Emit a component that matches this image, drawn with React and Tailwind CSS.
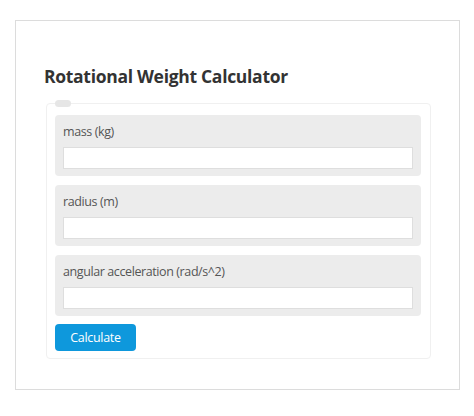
import React from 'react'

const FIELDS = ['mass (kg)', 'radius (m)', 'angular acceleration (rad/s^2)']

export default function App() {
  return (
    <div className="w-[474px] h-[416px] bg-white pt-[20px] pl-[15px] font-['Open_Sans',_'Noto_Sans',_sans-serif]">
      <div className="w-[445px] h-[370px] border border-[#dcdcdc] pl-[28px] pt-[43px]">
        <h1 className="text-[17.5px] leading-[24px] font-bold text-[#333] tracking-[-0.3px]">Rotational Weight Calculator</h1>
        <div className="relative mt-[15px] ml-[2px] w-[385px] h-[256px] border border-[#f0f0f0] rounded-[4px] pt-[11px] pl-[8px]">
          <span className="absolute left-[8px] -top-[4px] w-[16px] h-[7px] rounded-full bg-[#e6e6e6]" />
          <div className="flex flex-col gap-[9px]">
            {FIELDS.map(f => (
              <div key={f} className="w-[366px] h-[61px] bg-[#ececec] rounded-[4px] px-[8px] pt-[8px]">
                <div className="text-[12.5px] leading-[18px] text-[#555] tracking-[-0.4px]">{f}</div>
                <div className="mt-[6px] w-[350px] h-[22px] bg-white border border-[#dedede]" />
              </div>
            ))}
          </div>
          <button className="mt-[8px] w-[81px] h-[27px] rounded-[4px] bg-[#0e98dc] text-white text-[12.5px] tracking-[-0.3px] leading-[27px]">Calculate</button>
        </div>
      </div>
    </div>
  )
}
